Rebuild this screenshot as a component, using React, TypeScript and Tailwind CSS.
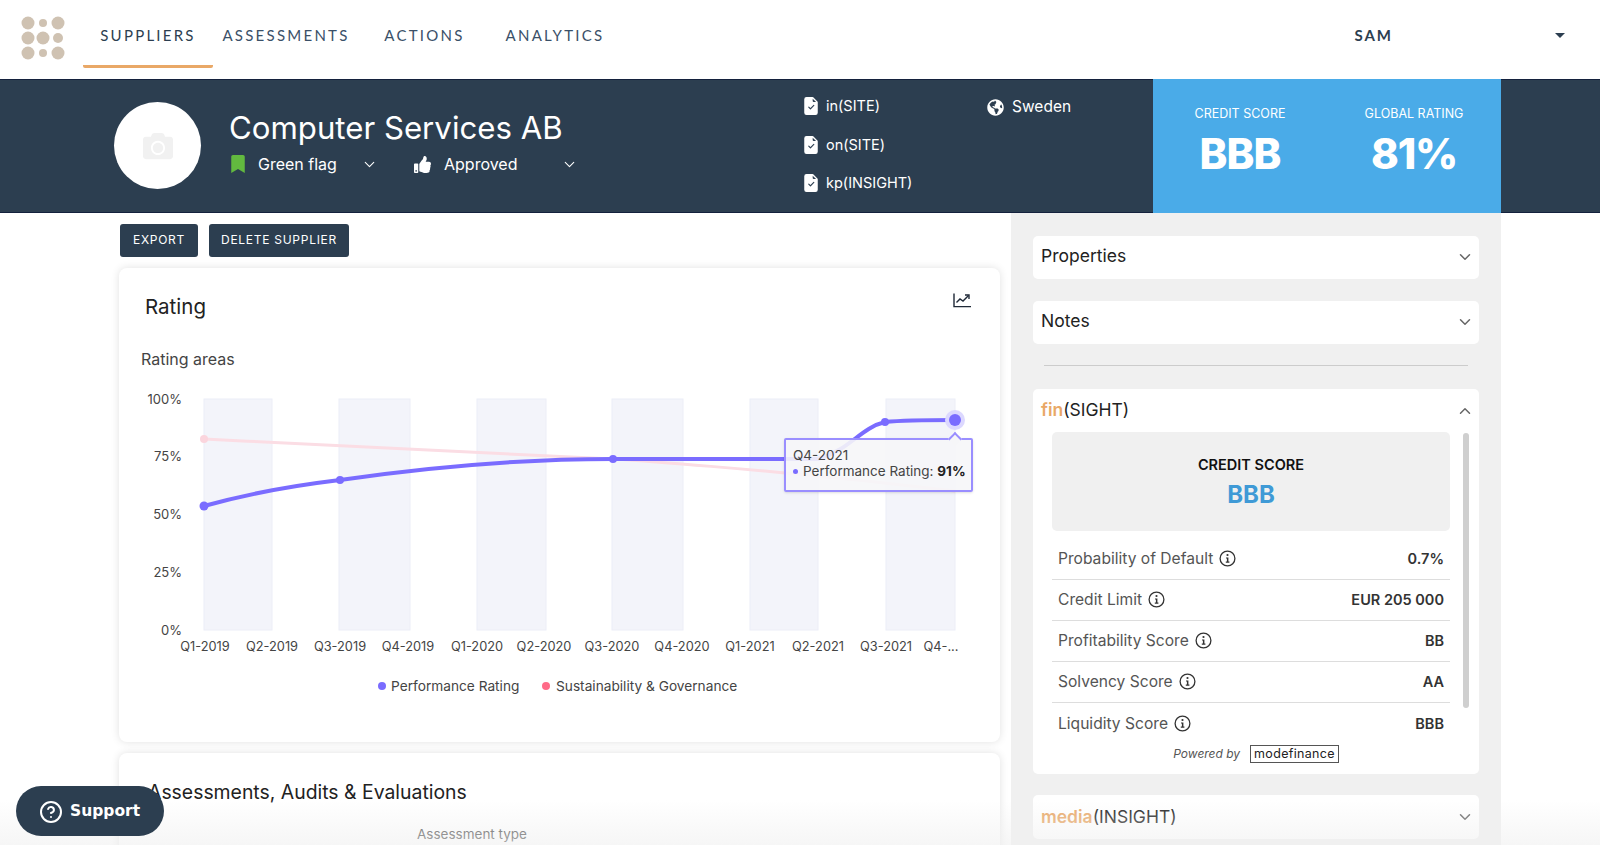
import { ChevronDown, ChevronUp, CircleHelp } from "lucide-react";
import { BsFileEarmarkCheckFill } from "react-icons/bs";
import { FaBookmark, FaCamera, FaGlobeAmericas, FaThumbsUp } from "react-icons/fa";

const NAV = [
  { label: "SUPPLIERS", cls: "w-[130px] text-center text-[#2c3e50] border-[#e9a867]" },
  { label: "ASSESSMENTS", cls: "w-[146px] text-center text-[#3a5068] border-transparent" },
  { label: "ACTIONS", cls: "w-[131px] text-center text-[#3a5068] border-transparent" },
  { label: "ANALYTICS", cls: "w-[130px] text-center text-[#3a5068] border-transparent" },
];

const FIN_ROWS = [
  { label: "Probability of Default", value: "0.7%" },
  { label: "Credit Limit", value: "EUR 205 000" },
  { label: "Profitability Score", value: "BB" },
  { label: "Solvency Score", value: "AA" },
  { label: "Liquidity Score", value: "BBB" },
];

const BANDS = [
  [204, 272],
  [339, 410],
  [477, 546],
  [612, 683],
  [750, 818],
  [886, 955],
];

const X_LABELS = [
  [205, "Q1-2019"],
  [272, "Q2-2019"],
  [340, "Q3-2019"],
  [408, "Q4-2019"],
  [477, "Q1-2020"],
  [544, "Q2-2020"],
  [612, "Q3-2020"],
  [682, "Q4-2020"],
  [750, "Q1-2021"],
  [818, "Q2-2021"],
  [886, "Q3-2021"],
  [941, "Q4-..."],
] as const;

const Y_LABELS = [
  [404, "100%"],
  [461, "75%"],
  [519, "50%"],
  [577, "25%"],
  [635, "0%"],
] as const;

function Logo() {
  return (
    <svg width="46" height="46" viewBox="0 0 46 46" fill="#cfc2b2">
      <circle cx="7" cy="8" r="6.5" />
      <circle cx="22" cy="8" r="4" />
      <circle cx="37" cy="8" r="6.5" />
      <circle cx="7" cy="23" r="6.5" />
      <circle cx="22" cy="23" r="6.5" />
      <circle cx="37" cy="23" r="5" />
      <circle cx="7" cy="38" r="6.5" />
      <circle cx="22" cy="38" r="4" />
      <circle cx="37" cy="38" r="6.5" />
    </svg>
  );
}

function TrendIcon() {
  return (
    <svg width="18" height="15" viewBox="0 0 18 15" fill="none" stroke="#1f2937" strokeWidth="1.4">
      <path d="M1 0.5V13.6H18" />
      <path d="M3.5 9.5L7 6L10 8L15.5 2.5" />
      <path d="M12 2H16V6" />
    </svg>
  );
}

function InfoIcon() {
  return (
    <svg width="17" height="17" viewBox="0 0 17 17" className="ml-[6px]">
      <circle cx="8.5" cy="8.5" r="7.4" fill="none" stroke="#333" strokeWidth="1.3" />
      <circle cx="8.5" cy="5" r="1.1" fill="#333" />
      <path d="M7 7.4H9.4V11.6H10.4V12.8H6.8V11.6H7.9V8.6H7Z" fill="#333" />
    </svg>
  );
}

function Insight({ children }: { children: string }) {
  return (
    <div className="flex items-center h-[38.5px]">
      <BsFileEarmarkCheckFill className="text-white mr-[6px] -ml-[1px]" size={18} />
      <span className="text-white text-[14.5px]">{children}</span>
    </div>
  );
}

function Accordion({ title }: { title: string }) {
  return (
    <div className="flex items-center justify-between h-[43px] bg-white rounded-[5px] pl-[8px] pr-[5px] pb-[2px] text-[#222] text-[17.5px]">
      {title}
      <ChevronDown size={18} className="text-[#666]" />
    </div>
  );
}

function RatingChart() {
  return (
    <div className="relative h-[330px]">
      <svg width="881" height="330" viewBox="119 385 881 330" className="block">
        {BANDS.map(([a, b]) => (
          <rect key={a} x={a} y={399} width={b - a} height={231} fill="#f3f4fa" stroke="#eceef7" strokeWidth="1" />
        ))}
        {Y_LABELS.map(([y, t]) => (
          <text key={t} x={182} y={y} textAnchor="end" fontSize="13" fill="#444">
            {t}
          </text>
        ))}
        {X_LABELS.map(([x, t]) => (
          <text key={t} x={x} y={651} textAnchor="middle" fontSize="12.8" fill="#444">
            {t}
          </text>
        ))}
        <path d="M204 439C400 449 613 459 613 459S760 468 955 491" fill="none" stroke="#fbdde4" strokeWidth="3" />
        <circle cx="204" cy="439" r="4" fill="#fbd5dd" />
        <path
          d="M204 506C250 493 290 486 340 480C430 467 520 459 613 459L818 459C850 450 860 428 885 422C905 420 930 420 955 420"
          fill="none"
          stroke="#7a6cff"
          strokeWidth="4"
        />
        <circle cx="204" cy="506" r="4.5" fill="#7a6cff" />
        <circle cx="340" cy="480" r="4" fill="#7a6cff" />
        <circle cx="613" cy="459" r="4" fill="#7a6cff" />
        <circle cx="885" cy="422" r="4" fill="#7a6cff" />
        <circle cx="955" cy="420" r="10" fill="#dcd8ff" />
        <circle cx="955" cy="420" r="6" fill="#7a6cff" />
        <circle cx="382" cy="686" r="4" fill="#7a6cff" />
        <text x="391" y="691" fontSize="13.7" fill="#444">
          Performance Rating
        </text>
        <circle cx="546" cy="686" r="4" fill="#ff6b88" />
        <text x="556" y="691" fontSize="13.7" fill="#444">
          Sustainability &amp; Governance
        </text>
      </svg>
      <div className="absolute left-[665px] top-[53px] w-[189px] h-[54px] bg-[#f6f6f8]/90 border-2 border-[#9a8eff] rounded-[2px] shadow px-[7px] pt-[7px] text-[13.5px] leading-[16px] text-[#444]">
        <div className="absolute -top-[6px] right-[11px] w-[10px] h-[10px] rotate-45 bg-[#f6f6f8] border-l-2 border-t-2 border-[#9a8eff]" />
        <div>Q4-2021</div>
        <div className="flex items-center whitespace-nowrap">
          <span className="shrink-0 w-[5px] h-[5px] rounded-full bg-[#7a6cff] mr-[5px]" />
          Performance Rating:&nbsp;<b className="text-[#222]">91%</b>
        </div>
      </div>
    </div>
  );
}

function FinSight() {
  return (
    <div className="relative h-[385px] bg-white rounded-[5px] mt-[23px] pl-[19px]">
      <div className="flex items-center justify-between h-[43px] -ml-[11px] pr-[5px] text-[17.5px] text-[#222]">
        <span>
          <span className="text-[#e9a867] font-semibold">fin</span>(SIGHT)
        </span>
        <ChevronUp size={18} className="text-[#666]" />
      </div>
      <div className="w-[398px]">
        <div className="flex flex-col items-center h-[99px] bg-[#f0f0f0] rounded-[5px] pt-[23px]">
          <div className="text-[14.5px] font-semibold text-[#111] leading-[20px]">CREDIT SCORE</div>
          <div className="mt-[3px] text-[24px] font-bold text-[#3f9ad6] leading-[34px]">BBB</div>
        </div>
        {FIN_ROWS.map((r, i) => (
          <div
            key={r.label}
            className={`flex items-center justify-between h-[41px] px-[6px] ${i < 4 ? "border-b border-[#ddd]" : ""} ${i === 0 ? "mt-[8px]" : ""}`}
          >
            <span className="flex items-center text-[15.6px] text-[#555]">
              {r.label}
              <InfoIcon />
            </span>
            <span className="text-[14.5px] font-semibold text-[#333]">{r.value}</span>
          </div>
        ))}
        <div className="flex items-center justify-center h-[20px] pl-[10px] text-[12px] italic text-[#555]">
          Powered by
          <span className="ml-[10px] border border-[#555] px-[3px] text-[12.5px] leading-[16px] not-italic text-[#222] tracking-wide">
            modefinance
          </span>
        </div>
      </div>
      <div className="absolute left-[430px] top-[44px] w-[6px] h-[275px] rounded-full bg-[#cfcfcf]" />
    </div>
  );
}

export default function App() {
  return (
    <div className="relative h-[845px] overflow-hidden bg-white font-['Inter',sans-serif]">
      <nav className="flex items-start h-[79px]">
        <div className="ml-[21px] mt-[15px] w-[62px]">
          <Logo />
        </div>
        {NAV.map((n) => (
          <div
            key={n.label}
            className={`h-[68px] pt-[24px] font-['Lato',sans-serif] text-[15px] tracking-[0.15em] border-b-[3px] rounded-b-[2px] ${n.cls}`}
          >
            {n.label}
          </div>
        ))}
        <div className="ml-auto mt-[24px] font-['Lato',sans-serif] text-[15px] font-bold tracking-[0.13em] text-[#2c3e50] mr-[207px]">
          SAM
        </div>
        <div className="absolute left-[1555px] top-[33px] w-0 h-0 border-x-[5px] border-t-[5px] border-x-transparent border-t-[#2c3e50]" />
      </nav>

      <header className="flex h-[134px] bg-[#2c3e50] border-y border-[#14213d] pl-[114px] pr-[99px]">
        <div className="flex items-center justify-center w-[87px] h-[87px] mt-[22px] rounded-full bg-white">
          <FaCamera size={30} className="text-[#f1f1f1]" />
        </div>
        <div className="w-[574px] ml-[28px] pt-[26px]">
          <h1 className="text-[31.2px] leading-[44px] text-white">Computer Services AB</h1>
          <div className="flex items-center h-[28px] text-white text-[16px]">
            <FaBookmark size={18} className="text-[#62b93f]" />
            <span className="ml-[11px] w-[103px]">Green flag</span>
            <ChevronDown size={17} strokeWidth={1.5} />
            <FaThumbsUp size={17} className="ml-[36px]" />
            <span className="ml-[13px] w-[117px]">Approved</span>
            <ChevronDown size={17} strokeWidth={1.5} />
          </div>
        </div>
        <div className="w-[184px] pt-[7px]">
          <Insight>in(SITE)</Insight>
          <Insight>on(SITE)</Insight>
          <Insight>kp(INSIGHT)</Insight>
        </div>
        <div className="flex w-[166px] h-[38px] mt-[8px] items-center text-white text-[15.5px]">
          <FaGlobeAmericas size={17} className="mr-[8px]" />
          Sweden
        </div>
        <div className="flex w-[348px] -my-px bg-[#4aabe8] text-white">
          <div className="w-[174px] pt-[27px] text-center">
            <div className="text-[12.5px] leading-[16px]">CREDIT SCORE</div>
            <div className="mt-[6px] text-[42px] leading-[52px] font-extrabold tracking-[-0.02em]">BBB</div>
          </div>
          <div className="w-[174px] pt-[27px] text-center">
            <div className="text-[12.5px] leading-[16px]">GLOBAL RATING</div>
            <div className="mt-[6px] text-[42px] leading-[52px] font-extrabold tracking-[-0.03em]">81%</div>
          </div>
        </div>
      </header>

      <main className="flex pl-[119px] pr-[99px]">
        <div className="w-[881px] mr-[11px]">
          <div className="flex gap-[11px] mt-[11px] pl-[1px]">
            <button className="w-[78px] h-[33px] pb-[2px] bg-[#2c3e50] rounded-[3px] text-white text-[12px] tracking-[0.06em]">
              EXPORT
            </button>
            <button className="w-[140px] h-[33px] pb-[2px] bg-[#2c3e50] rounded-[3px] text-white text-[12px] tracking-[0.06em]">
              DELETE SUPPLIER
            </button>
          </div>
          <section className="h-[474px] mt-[11px] bg-white rounded-[8px] shadow-[0_0_8px_rgba(0,0,0,0.12)]">
            <div className="flex items-start justify-between h-[79px] pl-[26px] pr-[29px] pt-[24px] text-[20.5px] text-[#222]">
              Rating
              <div className="pt-[1px]">
                <TrendIcon />
              </div>
            </div>
            <div className="pl-[22px] h-[38px] text-[16px] text-[#444]">Rating areas</div>
            <RatingChart />
          </section>
          <section className="h-[200px] mt-[11px] bg-white rounded-[8px] shadow-[0_0_8px_rgba(0,0,0,0.12)] pl-[29px] pt-[25px]">
            <h2 className="text-[19.4px] text-[#222]">Assessments, Audits &amp; Evaluations</h2>
            <div className="mt-[17px] ml-[269px] text-[13.5px] text-[#444]">Assessment type</div>
          </section>
        </div>
        <aside className="w-[490px] h-[632px] bg-[#f0f0f0] px-[22px] pt-[23px]">
          <Accordion title="Properties" />
          <div className="mt-[22px]">
            <Accordion title="Notes" />
          </div>
          <div className="mx-[11px] mt-[21px] border-t border-[#ccc]" />
          <FinSight />
          <div className="flex items-center justify-between h-[44px] mt-[21px] bg-white rounded-[5px] pl-[8px] pr-[5px] text-[17.5px] text-[#222]">
            <span>
              <span className="text-[#e9a867] font-semibold">media</span>(INSIGHT)
            </span>
            <ChevronDown size={18} className="text-[#666]" />
          </div>
        </aside>
      </main>

      <div className="pointer-events-none absolute left-0 right-0 bottom-0 h-[45px] bg-gradient-to-b from-transparent to-[#f0f0f0]/60" />

      <button className="absolute left-[16px] top-[786px] flex items-center gap-[7px] w-[148px] h-[50px] pl-[23px] pt-[1px] rounded-full bg-[#2c3e50] text-white font-['DejaVu_Sans',sans-serif] font-bold text-[15.5px]">
        <CircleHelp size={24} />
        Support
      </button>
    </div>
  );
}
